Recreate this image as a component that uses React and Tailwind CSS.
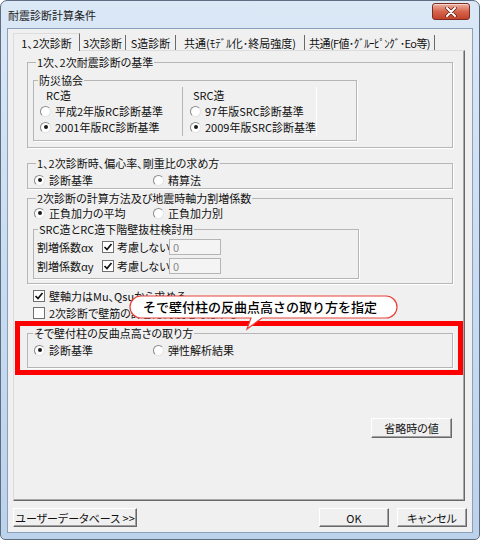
import React from 'react';

function Radio({ checked }) {
  return (
    <span className="flex h-[11px] w-[11px] shrink-0 items-center justify-center rounded-full border border-[#8a8a8a] border-b-[#e4e4e4] border-r-[#e4e4e4] bg-white">
      {checked && <span className="h-[4px] w-[4px] rounded-full bg-[#1a1a1a]" />}
    </span>
  );
}

function RadioItem({ checked, children, className = '' }) {
  return (
    <label className={`flex items-center gap-[4px] ${className}`}>
      <Radio checked={checked} />
      <span className="whitespace-nowrap">{children}</span>
    </label>
  );
}

function Checkbox({ checked }) {
  return (
    <span className="flex h-[12px] w-[12px] shrink-0 items-center justify-center border border-[#707070] bg-white">
      {checked && (
        <svg width="10" height="10" viewBox="0 0 10 10">
          <path d="M1.5 5 L4 7.5 L8.5 2" fill="none" stroke="#111" strokeWidth="1.7" />
        </svg>
      )}
    </span>
  );
}

function Group({ title, className = '', legendClass = 'ml-[8px]', children }) {
  return (
    <fieldset className={`border border-[#b6b6b6] shadow-[1px_1px_0_#fff] ${className}`}>
      <legend className={`${legendClass} px-px leading-[14px]`}>{title}</legend>
      {children}
    </fieldset>
  );
}

function WinButton({ children, className = '' }) {
  return (
    <button className={`flex items-center justify-center border border-t-white border-l-white border-r-[#696969] border-b-[#696969] bg-[#f0f0f0] shadow-[inset_-1px_-1px_0_#a0a0a0] whitespace-nowrap ${className}`}>
      {children}
    </button>
  );
}

const tabs = [
  { label: '1、2次診断', w: 'w-[67px]', active: true },
  { label: '3次診断', w: 'w-[46px]' },
  { label: 'S造診断', w: 'w-[50px]' },
  { label: '共通(ﾓﾃﾞﾙ化･終局強度)', w: 'w-[129px]' },
  { label: '共通(F値･ｸﾞﾙｰﾋﾟﾝｸﾞ･Eo等)', w: 'w-[130px] tracking-[-0.6px]' },
];

export default function App() {
  return (
    <div className="relative h-[540px] w-[480px] overflow-hidden font-['Noto_Sans_CJK_JP',sans-serif] text-[11px] leading-[14px] text-[#111] [font-feature-settings:'palt']">
      <div className="flex h-full flex-col rounded-t-[7px] rounded-b-[5px] border border-[#5d6d82] bg-gradient-to-b from-[#dbe8f6] via-[#c9dcf1] to-[#bcd2eb] px-[6px] pb-[6px]">
        {/* title bar */}
        <div className="flex h-[27px] items-start justify-between">
          <span className="ml-[1px] mt-[7px] text-[11px] text-[#1b1b1b]">耐震診断計算条件</span>
          <div className="mr-[3px] mt-[2px] flex h-[17px] w-[38px] items-center justify-center rounded-[3px] border border-[#7c2d1f] bg-gradient-to-b from-[#eab2a5] via-[#d6654b] to-[#c2412a] shadow-[inset_0_1px_0_#f6d2ca]">
            <svg width="12" height="10" viewBox="0 0 12 10">
              <path d="M2 1 L10 9 M10 1 L2 9" stroke="#5a1a10" strokeWidth="3.4" strokeLinecap="round" />
              <path d="M2 1 L10 9 M10 1 L2 9" stroke="#fff" strokeWidth="2" strokeLinecap="round" />
            </svg>
          </div>
        </div>

        {/* client area */}
        <div className="flex flex-1 flex-col border border-[#8a9fb9] bg-[#f0f0f0] px-[5px] pt-[4px]">
          {/* tab strip */}
          <div className="flex h-[17px] items-end">
            {tabs.map(t =>
              t.active ? (
                <div key={t.label} className={`relative z-10 -mb-px flex h-[18px] ${t.w} items-center justify-center border-l border-t border-r border-l-[#dcdcdc] border-t-[#dcdcdc] border-r-[#696969] bg-[#f0f0f0] whitespace-nowrap`}>
                  {t.label}
                </div>
              ) : (
                <div key={t.label} className={`flex h-[15px] ${t.w} items-center justify-center border-r border-[#696969] whitespace-nowrap`}>
                  {t.label}
                </div>
              )
            )}
          </div>

          {/* tab panel */}
          <div className="flex h-[451px] w-[452px] flex-col border border-l-[#dcdcdc] border-t-[#dcdcdc] border-r-[#696969] border-b-[#696969] shadow-[inset_-1px_-1px_0_#a8a8a8]">
            <Group title="1次、2次耐震診断の基準" className="ml-[13px] mt-[4px] h-[93px] w-[426px]">
              <Group title="防災協会" legendClass="ml-[4px]" className="ml-[5px] mt-[4px] h-[68px] w-[324px]">
                <div className="flex">
                  <div className="w-[148px] pl-[6px]">
                    <div className="flex h-[16px] items-center pl-[6px]">RC造</div>
                    <div className="flex h-[16px] items-center">
                      <RadioItem>平成2年版RC診断基準</RadioItem>
                    </div>
                    <div className="flex h-[16px] items-center">
                      <RadioItem checked>2001年版RC診断基準</RadioItem>
                    </div>
                  </div>
                  <div className="h-[49px] border-l border-[#b6b6b6] pl-[7px] shadow-[1px_0_0_#fff]">
                    <div className="flex h-[16px] items-center pl-[3px]">SRC造</div>
                    <div className="flex h-[16px] items-center">
                      <RadioItem>97年版SRC診断基準</RadioItem>
                    </div>
                    <div className="flex h-[16px] items-center">
                      <RadioItem checked>2009年版SRC診断基準</RadioItem>
                    </div>
                  </div>
                </div>
              </Group>
            </Group>

            <Group title="1、2次診断時、偏心率、剛重比の求め方" className="ml-[13px] mt-[8px] h-[33px] w-[426px]">
              <div className="mt-[3px] flex h-[14px] items-center pl-[6px]">
                <RadioItem checked className="w-[119px]">診断基準</RadioItem>
                <RadioItem>精算法</RadioItem>
              </div>
            </Group>

            <Group title="2次診断の計算方法及び地震時軸力割増係数" className="ml-[13px] mt-[2px] h-[93px] w-[426px]">
              <div className="mt-[1px] flex h-[14px] items-center pl-[6px]">
                <RadioItem checked className="w-[119px]">正負加力の平均</RadioItem>
                <RadioItem>正負加力別</RadioItem>
              </div>
              <Group title="SRC造とRC造下階壁抜柱検討用" legendClass="ml-[4px]" className="ml-[5px] mt-[2px] h-[57px] w-[326px]">
                {['割増係数αx', '割増係数αy'].map((label, i) => (
                  <div key={label} className={`flex h-[18px] items-center pl-[3px] ${i === 0 ? 'mt-[2px]' : 'mt-[1px]'}`}>
                    <span className="w-[65px] whitespace-nowrap">{label}</span>
                    <Checkbox checked />
                    <span className="ml-[3px] w-[52px] whitespace-nowrap">考慮しない</span>
                    <div className="flex h-[16px] w-[52px] items-center border border-[#b5b5b5] bg-[#f4f4f4] pl-[3px] text-[#8a8a8a]">0</div>
                  </div>
                ))}
              </Group>
            </Group>

            <div className="ml-[19px] mt-[4px] flex h-[16px] items-center gap-[4px]">
              <Checkbox checked />
              <span className="whitespace-nowrap">壁軸力はMu、Qsuから求める</span>
            </div>
            <div className="ml-[19px] mt-[1px] flex h-[16px] items-center gap-[4px]">
              <Checkbox />
              <span className="whitespace-nowrap">2次診断で壁筋の許容応力度を考慮する</span>
            </div>

            <Group title="そで壁付柱の反曲点高さの取り方" legendClass="ml-[5px]" className="ml-[13px] mt-[5px] h-[42px] w-[426px]">
              <div className="mt-[3px] flex h-[14px] items-center pl-[6px]">
                <RadioItem checked className="w-[119px]">診断基準</RadioItem>
                <RadioItem>弾性解析結果</RadioItem>
              </div>
            </Group>

            <WinButton className="ml-[357px] mt-[50px] h-[20px] w-[81px]">省略時の値</WinButton>
          </div>

          {/* bottom buttons */}
          <div className="mt-[7px] flex h-[19px] items-stretch">
            <WinButton className="w-[124px]">ユーザーデータベース &gt;&gt;</WinButton>
            <WinButton className="ml-auto w-[70px]">OK</WinButton>
            <WinButton className="ml-[8px] w-[70px]">キャンセル</WinButton>
          </div>
        </div>
      </div>

      {/* annotation: red frame */}
      <div className="pointer-events-none absolute left-[15px] top-[321px] h-[54px] w-[448px] border-[5px] border-[#ff0000]" />

      {/* annotation: callout */}
      <svg className="absolute left-[129px] top-[295px]" width="270" height="36" viewBox="0 0 270 36">
        <path d="M12 1 H257 A11 11 0 0 1 257 23 H133 L118 34 L122 23 H12 A11 11 0 0 1 12 1 Z" fill="#fff" stroke="#e8413a" strokeWidth="1.2" />
      </svg>
      <div className="absolute left-[143px] top-[296px] flex h-[22px] items-center whitespace-nowrap text-[13px] font-medium text-black [font-feature-settings:normal]">
        そで壁付柱の反曲点高さの取り方を指定
      </div>
    </div>
  );
}
